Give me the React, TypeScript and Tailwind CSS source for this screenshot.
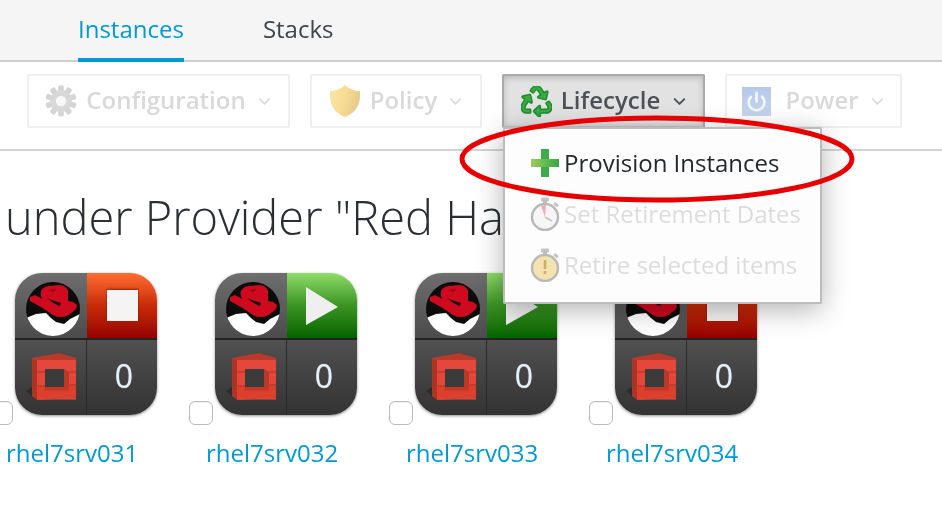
import { ChevronDown, Power } from "lucide-react";
import { FaRecycle } from "react-icons/fa";

const font = { fontFamily: '"Open Sans", "Liberation Sans", sans-serif' };

function Gear() {
  const teeth = [0, 36, 72, 108, 144];
  return (
    <svg width="32" height="32" viewBox="0 0 34 34" className="blur-[0.5px]">
      {teeth.map((a) => (
        <rect key={a} x="14" y="0.5" width="6" height="33" rx="1.5" fill="#d4d4d4" transform={`rotate(${a} 17 17)`} />
      ))}
      <circle cx="17" cy="17" r="11.5" fill="#d8d8d8" />
      <circle cx="17" cy="17" r="5.5" fill="#f8f8f8" />
    </svg>
  );
}

function Shield() {
  return (
    <svg width="32" height="34" viewBox="0 0 32 34" className="blur-[0.6px]">
      <defs>
        <linearGradient id="sh" x1="0" y1="0" x2="1" y2="0.3">
          <stop offset="0" stopColor="#fbe7a8" />
          <stop offset="0.55" stopColor="#f7dc92" />
          <stop offset="1" stopColor="#e6cc8c" />
        </linearGradient>
      </defs>
      <path d="M16 1 C20 5 26 7 31 7 C32 20 27 29 16 33 C5 29 0 20 1 7 C6 7 12 5 16 1Z" fill="url(#sh)" />
    </svg>
  );
}

function Plus() {
  return (
    <svg width="30" height="30" viewBox="0 0 30 30" className="blur-[0.5px]">
      <defs>
        <linearGradient id="pl" x1="0" y1="0" x2="1" y2="0">
          <stop offset="0" stopColor="#9ccc5a" />
          <stop offset="1" stopColor="#35a845" />
        </linearGradient>
      </defs>
      <rect x="11" y="1" width="8" height="28" fill="#3cab4a" />
      <rect x="1" y="11" width="28" height="8" fill="url(#pl)" />
    </svg>
  );
}

function Stopwatch({ warn }: { warn?: boolean }) {
  return (
    <svg width="30" height="34" viewBox="0 0 30 34" className="blur-[0.5px]">
      <rect x="11" y="0.5" width="8" height="4" rx="1" fill="#c4c4c4" />
      <rect x="13" y="3" width="4" height="4" fill="#bdbdbd" />
      <rect x="24" y="6" width="5" height="3" rx="1" fill="#c4c4c4" transform="rotate(40 26 7)" />
      <circle cx="15" cy="20" r="13" fill={warn ? "#f4e3ae" : "#f6f6f6"} stroke="#b9b9b9" strokeWidth="2.5" />
      {warn ? (
        <>
          <rect x="13.7" y="12" width="2.6" height="9" fill="#c8b06a" />
          <rect x="13.7" y="23" width="2.6" height="3" fill="#c8b06a" />
        </>
      ) : (
        <>
          <path d="M15 20 L11 9 L16 8 Z" fill="#f4a9b4" />
          <path d="M15 20 L22 24" stroke="#c4c4c4" strokeWidth="1.5" />
        </>
      )}
    </svg>
  );
}

function RedHat() {
  return (
    <svg width="54" height="56" viewBox="0 0 54 56">
      <defs>
        <clipPath id="rhc">
          <circle cx="27" cy="28" r="27" />
        </clipPath>
      </defs>
      <circle cx="27" cy="28" r="27" fill="#0c0c0c" />
      <g clipPath="url(#rhc)">
        <path d="M0 37 L10 33 L20 32 L25 37 L30 41 L38 43 L44 38 L56 32 L56 58 L0 58Z" fill="#fff" />
        <path d="M15 10 C17 6 21 5 24 5 L33 4 C38 4 41 7 42 10 L42 20 L47 21 L51 24 C51 28 48 30 45 32 C42 35 38 36 34 36 C31 36 29 35 27 34 L15 26 L4 20 L4 16 L9 14 L16 18 C15 15 14 13 15 10Z" fill="#cf0a1e" />
        <path d="M21 17 C25 20 28 23 34 25 L35 22 C31 21 26 19 21 17Z" fill="#111" />
        <path d="M23 9 L31 8 L27 11Z" fill="#8c0010" />
      </g>
    </svg>
  );
}

function OpenStack() {
  return (
    <svg width="45" height="48" viewBox="0 0 45 48" className="overflow-visible">
      <path d="M0 43 L-6 38 L0 34Z" fill="#2c2c2c" />
      <path d="M0 5 L27 0 L44 5 L44 9 L5 9 L0 7Z" fill="#b93a2a" />
      <path d="M0 6 L5 8 L5 47 L0 43Z" fill="#ad3325" />
      <rect x="5" y="7" width="39" height="39.5" fill="#e5483a" />
      <path d="M5 33 H44 V45 L5 47Z" fill="#dc3f2b" />
      <rect x="13" y="16" width="19" height="18" fill="#3b3b3b" />
      <path d="M13 34 L32 34 L37 31 L37 37.5 L13 37.5Z" fill="#c43625" />
      <path d="M32 16 L37 19 L37 32 L32 34Z" fill="#bb3728" />
      <path d="M0 19 H13 M0 33 H13 M37 19 H44 M37 32 H44" stroke="#a93022" strokeWidth="1" />
    </svg>
  );
}

function Tile({ running }: { running: boolean }) {
  return (
    <div className="w-[142px] h-[142px] rounded-[27px] overflow-hidden grid grid-cols-[72px_70px] grid-rows-[67px_75px] shadow-[0_1px_3px_rgba(0,0,0,0.45)]">
      <div className="flex items-start justify-center pl-[3px] pt-[8px] bg-gradient-to-b from-[#6e6e6e] to-[#4c4c4c] border-b-2 border-b-[#222]">
        <RedHat />
      </div>
      <div
        className={
          running
            ? "flex items-center justify-center bg-gradient-to-b from-[#8fdc68] via-[#3a9422] to-[#006400] border-b-2 border-b-[#222]"
            : "flex items-center justify-center bg-gradient-to-b from-[#ff6c30] via-[#c92a08] to-[#950000] border-b-2 border-b-[#222]"
        }
      >
        {running ? (
          <svg width="34" height="40" viewBox="0 0 34 40">
            <path d="M1 1 L33 21 L1 39Z" fill="#efefef" />
          </svg>
        ) : (
          <div className="w-[31px] h-[31px] bg-[#f4f4f4] shadow-[0_-1px_2px_rgba(90,20,0,0.7)]" />
        )}
      </div>
      <div className="flex pl-[17px] pt-[13px] bg-gradient-to-b from-[#515151] to-[#333] border-r border-r-[#2a2a2a]">
        <OpenStack />
      </div>
      <div className="flex items-center justify-center pl-[4px] pb-[4px] bg-gradient-to-b from-[#505050] to-[#333] text-[32px] leading-none text-[#e9eff4] [text-shadow:0_0_1px_#8fc4ee]">
        0
      </div>
    </div>
  );
}

function Card({ name, running }: { name: string; running: boolean }) {
  return (
    <div className="relative w-[200px] shrink-0 flex flex-col">
      <div className="ml-[26px]">
        <Tile running={running} />
      </div>
      <div className="absolute left-0 top-[128px] w-[24px] h-[24px] rounded-[6px] bg-white border border-[#bbb] shadow-[inset_0_1px_1px_rgba(0,0,0,0.06)]" />
      <a className="ml-[17px] mt-[22px] text-[24px] leading-[32px] text-[#0099d3]">{name}</a>
    </div>
  );
}

function ToolButton({ icon, label, w }: { icon: React.ReactNode; label: string; w: string }) {
  return (
    <div className={`${w} h-[54px] flex items-center justify-center gap-[9px] pl-[2px] border-2 border-[#efefef] rounded-[2px] bg-white`}>
      {icon}
      <span className="text-[24px] leading-[32px] pb-[2px] font-semibold text-[#d9d9d9]">{label}</span>
      <ChevronDown size={19} strokeWidth={2} className="text-[#d9d9d9]" />
    </div>
  );
}

function MenuRow({ icon, label, active }: { icon: React.ReactNode; label: string; active?: boolean }) {
  return (
    <div className="h-[51px] flex items-center pl-[25px]">
      <div className="w-[34px] flex">{icon}</div>
      <span className={active ? "text-[24px] text-[#24292e]" : "text-[24px] text-[#dcdcdc]"}>{label}</span>
    </div>
  );
}

export default function App() {
  return (
    <div style={font} className="relative w-[942px] h-[506px] overflow-hidden bg-white blur-[0.25px]">
      <div className="h-[62px] bg-[#f5f5f5] border-b-2 border-b-[#cfcfcf] flex pl-[78px] gap-[79px] text-[24px]">
        <div className="h-[62px] pt-[11px] border-b-4 border-b-[#0099d3] text-[#0099d3]">Instances</div>
        <div className="pt-[11px] text-[#3f444a]">Stacks</div>
      </div>
      <div className="h-[89px] border-b-2 border-b-[#d4d4d4] flex items-start pt-[12px] pl-[27px] gap-[20px]">
        <ToolButton w="w-[263px]" label="Configuration" icon={<Gear />} />
        <ToolButton w="w-[172px]" label="Policy" icon={<Shield />} />
        <div className="w-[203px] h-[54px] flex items-center justify-center gap-[9px] pl-[3px] border-2 border-[#aaa] border-b-[#c4c4c4] rounded-[2px] bg-[#e2e2e2] shadow-[inset_0_2px_6px_rgba(0,0,0,0.18)]">
          <FaRecycle size={31} stroke="#1f8a2c" strokeWidth={24} className="text-[#35ad3f] blur-[0.4px]" />
          <span className="text-[24px] leading-[32px] pb-[2px] font-semibold text-[#4d5258]">Lifecycle</span>
          <ChevronDown size={19} strokeWidth={2.5} className="text-[#4d5258] ml-[1px]" />
        </div>
        <ToolButton
          w="w-[177px]"
          label="Power"
          icon={
            <div className="w-[29px] h-[29px] mr-[5px] flex items-center justify-center bg-gradient-to-b from-[#b5c9ea] to-[#c6d5ee] blur-[0.4px]">
              <Power size={21} strokeWidth={3} className="text-[#f4f7fc]" />
            </div>
          }
        />
      </div>
      <h1 className="mt-[34px] pl-[5px] text-[47px] leading-[64px] font-light text-[#2b2f33] whitespace-nowrap">
        under Provider "Red Hat
      </h1>
      <div className="flex mt-[24px] -ml-[11px]">
        <Card name="rhel7srv031" running={false} />
        <Card name="rhel7srv032" running={true} />
        <Card name="rhel7srv033" running={true} />
        <Card name="rhel7srv034" running={false} />
      </div>

      <div className="absolute left-[503px] top-[127px] w-[319px] h-[177px] bg-[#fdfdfd] border-2 border-[#bcbcbc] rounded-[2px] shadow-[0_6px_28px_rgba(0,0,0,0.3)] pt-[8px]">
        <MenuRow active label="Provision Instances" icon={<Plus />} />
        <MenuRow label="Set Retirement Dates" icon={<Stopwatch />} />
        <MenuRow label="Retire selected items" icon={<Stopwatch warn />} />
      </div>

      <svg className="absolute left-[455px] top-[110px]" width="405" height="100" viewBox="0 0 405 100">
        <ellipse cx="202" cy="49" rx="195" ry="41" fill="none" stroke="#e60000" strokeWidth="5" />
      </svg>
    </div>
  );
}
